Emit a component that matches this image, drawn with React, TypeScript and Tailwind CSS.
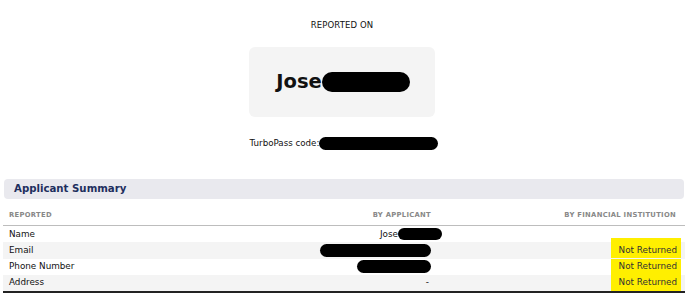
import React from "react";

type Row = {
  label: string;
  applicant: React.ReactNode;
  institution?: string;
  shaded: boolean;
};

const Blot = ({ w, h = 13 }: { w: number; h?: number }) => (
  <span
    className="inline-block shrink-0 rounded-full bg-black align-middle"
    style={{ width: w, height: h }}
  />
);

const rows: Row[] = [
  {
    label: "Name",
    applicant: (
      <span className="-mr-[11px] inline-flex items-center">
        Jose
        <Blot w={44} h={12} />
      </span>
    ),
    shaded: false,
  },
  { label: "Email", applicant: <Blot w={111} h={13} />, institution: "Not Returned", shaded: true },
  { label: "Phone Number", applicant: <Blot w={74} h={13} />, institution: "Not Returned", shaded: false },
  { label: "Address", applicant: <span className="pr-[2px]">-</span>, institution: "Not Returned", shaded: true },
];

export default function App() {
  return (
    <div className="w-[688px] h-[293px] overflow-hidden bg-white font-['DejaVu_Sans',sans-serif] text-[#111]">
      <div className="flex flex-col items-center pt-[19px]">
        <div className="mr-[4px] text-[8.5px] leading-[12px] tracking-[0.1px]">REPORTED ON</div>
        <div className="mr-[4px] mt-[16px] flex h-[70px] w-[186px] items-center justify-center rounded-[6px] bg-[#f4f4f4] pl-[2px]">
          <span className="text-[19.5px] font-bold leading-none">Jose</span>
          <Blot w={88} h={20} />
        </div>
        <div className="mt-[20px] flex items-center whitespace-nowrap text-[8.7px]">
          <span>TurboPass code:</span>
          <Blot w={119} h={13} />
        </div>
      </div>

      <div className="mx-[4px] mt-[29px] flex h-[20px] items-center rounded-[4px] bg-[#e9e9ee] pl-[10px] text-[10.2px] font-bold text-[#1e2f5e]">
        Applicant Summary
      </div>

      <div className="mx-[3px] mt-[7px] flex h-[20px] items-center border-b border-[#bdbdbd] pl-[6px] pr-[9px] text-[6.8px] font-bold tracking-[0.3px] text-[#888]">
        <div className="flex-1">REPORTED</div>
        <div className="w-[120px] text-right">BY APPLICANT</div>
        <div className="w-[245px] text-right">BY FINANCIAL INSTITUTION</div>
      </div>

      <div className="mx-[3px] border-b-[2px] border-[#222]">
        {rows.map((r, i) => (
          <div
            key={r.label}
            className={`flex h-[16.25px] items-center pl-[6px] pr-[9px] text-[8.8px] ${r.shaded ? "bg-[#f4f4f4]" : "bg-white"}`}
          >
            <div className="flex-1">{r.label}</div>
            <div className="flex w-[120px] justify-end">{r.applicant}</div>
            <div className="flex w-[245px] justify-end">
              {r.institution && (
                <span
                  className={`-mr-[5px] flex items-center bg-[#ffef00] pl-[8px] pr-[4px] text-[#333] ${
                    i === 1 ? "-mt-[4px] h-[20px] pt-[4px]" : "h-[16.25px]"
                  }`}
                >
                  {r.institution}
                </span>
              )}
            </div>
          </div>
        ))}
      </div>
    </div>
  );
}
